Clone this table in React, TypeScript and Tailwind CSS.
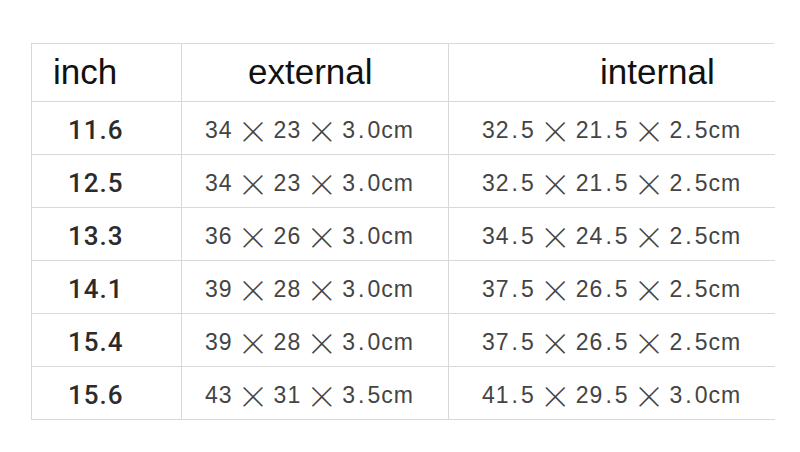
const rows = [
  { inch: '11.6', ext: ['34', '23', '3.0cm'], int: ['32.5', '21.5', '2.5cm'] },
  { inch: '12.5', ext: ['34', '23', '3.0cm'], int: ['32.5', '21.5', '2.5cm'] },
  { inch: '13.3', ext: ['36', '26', '3.0cm'], int: ['34.5', '24.5', '2.5cm'] },
  { inch: '14.1', ext: ['39', '28', '3.0cm'], int: ['37.5', '26.5', '2.5cm'] },
  { inch: '15.4', ext: ['39', '28', '3.0cm'], int: ['37.5', '26.5', '2.5cm'] },
  { inch: '15.6', ext: ['43', '31', '3.5cm'], int: ['41.5', '29.5', '3.0cm'] },
];

// the dots in the source are set a little wider than the font's own
function Num({ text }: { text: string }) {
  const [a, b] = text.split('.');
  if (b === undefined) return <span>{a}</span>;
  return (
    <span>
      {a}
      <span className="px-[2px]">.</span>
      {b}
    </span>
  );
}

function Size({ parts }: { parts: string[] }) {
  return (
    <span className="flex items-center">
      {parts.map((p, i) => (
        <span key={i} className="flex items-center">
          {i > 0 && (
            <span className="-mt-[2px] ml-[5px] mr-[4px] inline-block text-[31px] font-light leading-none text-[#444] [font-family:'Noto_Sans_CJK_SC',sans-serif]">
              ×
            </span>
          )}
          <Num text={p} />
        </span>
      ))}
    </span>
  );
}

export default function App() {
  return (
    <div className="h-[452px] w-[800px] bg-white pl-[31px] pt-[43px] [font-family:'Liberation_Sans',Arial,sans-serif]">
      <div className="grid w-[743px] grid-cols-[150px_267px_326px] border-l border-t border-[#d9d9d9]">
        {/* Header */}
        <div className="flex h-[58px] items-center border-b border-r border-[#d9d9d9] pl-[21px] text-[35px] text-[#111]">
          inch
        </div>
        <div className="flex h-[58px] items-center border-b border-r border-[#d9d9d9] pl-[66px] text-[35px] text-[#111]">
          external
        </div>
        <div className="flex h-[58px] items-center border-b border-[#d9d9d9] pl-[151px] text-[35px] text-[#111]">
          internal
        </div>

        {rows.map(r => (
          <div key={r.inch} className="contents">
            <div className="flex h-[53px] items-center border-b border-r border-[#d9d9d9] pt-[4px] pl-[36px] text-[26px] font-medium tracking-[1px] text-[#2b2b2b] [font-family:Roboto,sans-serif]">
              {r.inch}
            </div>
            <div className="flex h-[53px] items-center border-b border-r border-[#d9d9d9] pt-[4px] pl-[23px] text-[23px] tracking-[1px] text-[#444]">
              <Size parts={r.ext} />
            </div>
            <div className="flex h-[53px] items-center border-b border-[#d9d9d9] pt-[4px] pl-[33px] text-[23px] tracking-[1px] text-[#444]">
              <Size parts={r.int} />
            </div>
          </div>
        ))}
      </div>
    </div>
  );
}
